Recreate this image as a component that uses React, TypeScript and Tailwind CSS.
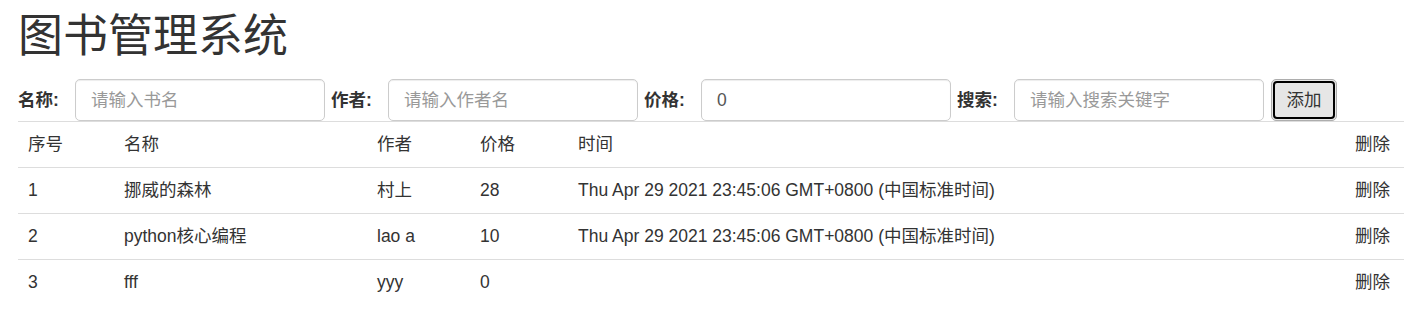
const rows = [
  { id: 1, name: '挪威的森林', author: '村上', price: 28, time: 'Thu Apr 29 2021 23:45:06 GMT+0800 (中国标准时间)' },
  { id: 2, name: 'python核心编程', author: 'lao a', price: 10, time: 'Thu Apr 29 2021 23:45:06 GMT+0800 (中国标准时间)' },
  { id: 3, name: 'fff', author: 'yyy', price: 0, time: '' },
];

const fields = [
  { label: '名称:', placeholder: '请输入书名', value: '' },
  { label: '作者:', placeholder: '请输入作者名', value: '' },
  { label: '价格:', placeholder: '', value: '0' },
  { label: '搜索:', placeholder: '请输入搜索关键字', value: '' },
];

export default function App() {
  return (
    <div className="min-h-[319px] bg-white pl-[18px] text-[17.5px] leading-[25px] text-[#333] font-['Liberation_Sans','Noto_Sans_CJK_SC',sans-serif]">
      <h1 className="pt-[12px] pb-[17px] text-[45px] leading-[50px] font-normal">图书管理系统</h1>

      {/* Form row */}
      <div className="flex items-center h-[42px]">
        {fields.map((f) => (
          <div key={f.label} className="flex items-center mr-[6px]">
            <label className="w-[57px] shrink-0 font-bold">{f.label}</label>
            <input
              className="w-[250px] h-[42px] rounded-[5px] border border-[#ccc] px-[15px] text-[17.5px] text-[#555] placeholder:text-[#999] outline-none shadow-[inset_0_1px_1px_rgba(0,0,0,0.075)]"
              placeholder={f.placeholder}
              defaultValue={f.value}
            />
          </div>
        ))}
        <button className="ml-[1px] h-[42px] w-[66px] rounded-[5px] border border-[#adadad] bg-[#e6e6e6] p-[1px]">
          <span className="flex h-full w-full items-center justify-center rounded-[4px] border-2 border-black">添加</span>
        </button>
      </div>

      {/* Table */}
      <table className="w-[1386px] border-collapse">
        <thead>
          <tr className="border-t border-b border-[#ddd]">
            <th className="w-[96px] px-[10px] py-[10px] text-left font-normal">序号</th>
            <th className="w-[253px] px-[10px] py-[10px] text-left font-normal">名称</th>
            <th className="w-[103px] px-[10px] py-[10px] text-left font-normal">作者</th>
            <th className="w-[98px] px-[10px] py-[10px] text-left font-normal">价格</th>
            <th className="px-[10px] py-[10px] text-left font-normal">时间</th>
            <th className="w-[60px] pl-[10px] pr-[14px] py-[10px] text-right font-normal">删除</th>
          </tr>
        </thead>
        <tbody>
          {rows.map((r) => (
            <tr key={r.id} className="border-t border-[#ddd]">
              <td className="px-[10px] py-[10px]">{r.id}</td>
              <td className="px-[10px] py-[10px]">{r.name}</td>
              <td className="px-[10px] py-[10px]">{r.author}</td>
              <td className="px-[10px] py-[10px]">{r.price}</td>
              <td className="px-[10px] py-[10px]">{r.time}</td>
              <td className="pl-[10px] pr-[14px] py-[10px] text-right">删除</td>
            </tr>
          ))}
        </tbody>
      </table>
    </div>
  );
}
